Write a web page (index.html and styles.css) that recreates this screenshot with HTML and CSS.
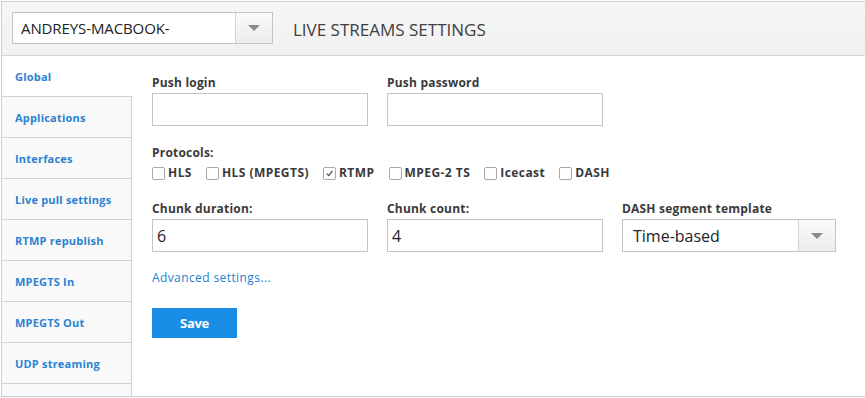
FILE: index.html
```html
<!DOCTYPE html>
<html lang="en">
<head>
  <meta charset="UTF-8">
  <title>Live streams settings</title>
  <link rel="stylesheet" href="styles.css">
</head>
<body>
  <div class="frame">
    <header class="topbar">
      <div class="picker host-picker">
        <span class="picker-value">ANDREYS-MACBOOK-</span>
        <span class="picker-arrow"><span class="tri"></span></span>
      </div>
      <h1>LIVE STREAMS SETTINGS</h1>
    </header>

    <div class="layout">
      <nav class="tabs">
        <a class="tab active">Global</a>
        <a class="tab">Applications</a>
        <a class="tab">Interfaces</a>
        <a class="tab">Live pull settings</a>
        <a class="tab">RTMP republish</a>
        <a class="tab">MPEGTS In</a>
        <a class="tab">MPEGTS Out</a>
        <a class="tab">UDP streaming</a>
        <span class="tab stub"></span>
      </nav>

      <main class="panel">
        <div class="row">
          <div class="field">
            <label>Push login</label>
            <div class="input"></div>
          </div>
          <div class="field">
            <label>Push password</label>
            <div class="input"></div>
          </div>
        </div>

        <div class="protocols">
          <label>Protocols:</label>
          <div class="checks">
            <span class="check"><span class="box"></span>HLS</span>
            <span class="check"><span class="box"></span>HLS (MPEGTS)</span>
            <span class="check"><span class="box on"><svg viewBox="0 0 10 10" width="9" height="9"><path d="M2 5.2 L4.2 7.4 L8.2 2.2" fill="none" stroke="#444" stroke-width="1.3"/></svg></span>RTMP</span>
            <span class="check"><span class="box"></span>MPEG-2 TS</span>
            <span class="check"><span class="box"></span>Icecast</span>
            <span class="check"><span class="box"></span>DASH</span>
          </div>
        </div>

        <div class="row">
          <div class="field">
            <label>Chunk duration:</label>
            <div class="input">6</div>
          </div>
          <div class="field">
            <label>Chunk count:</label>
            <div class="input">4</div>
          </div>
          <div class="field">
            <label>DASH segment template</label>
            <div class="picker">
              <span class="picker-value">Time-based</span>
              <span class="picker-arrow"><span class="tri"></span></span>
            </div>
          </div>
        </div>

        <a class="advanced">Advanced settings...</a>

        <button class="save">Save</button>
      </main>
    </div>
  </div>
</body>
</html>
```

FILE: styles.css
```css
body {
  margin: 0;
  background: #fff;
  font-family: "Open Sans", Arial, sans-serif;
  color: #333;
}
.frame {
  margin: 1px 0 0 1px;
  height: 394px;
  border-top: 1px solid #cdcdcd;
  border-left: 1px solid #cdcdcd;
  border-bottom: 1px solid #cdcdcd;
  display: flex;
  flex-direction: column;
}
.topbar {
  height: 53px;
  background: linear-gradient(#f6f6f6, #f1f1f1);
  border-bottom: 1px solid #d6d6d6;
  display: flex;
  align-items: center;
  padding-left: 10px;
}
.topbar h1 {
  margin: 0 0 0 20px;
  font-family: "Open Sans", Arial, sans-serif;
  font-weight: 400;
  font-size: 17px;
  letter-spacing: 0;
  color: #404040;
  padding-top: 1px;
}
.picker {
  display: flex;
  border: 1px solid #c4c4c4;
  background: #fff;
  box-sizing: border-box;
  height: 33px;
}
.host-picker {
  width: 261px;
  height: 32px;
  margin-top: -1px;
}
.picker-value {
  flex: 1;
  display: flex;
  align-items: center;
  padding-left: 10px;
  font-size: 16px;
  color: #222;
}
.host-picker .picker-value {
  padding-left: 8px;
  font-size: 15px;
  letter-spacing: -0.1px;
}
.picker-arrow {
  width: 36px;
  border-left: 1px solid #d4d4d4;
  background: linear-gradient(#fafafa, #ececec);
  display: flex;
  align-items: center;
  justify-content: center;
}
.tri {
  width: 0;
  height: 0;
  border-left: 6px solid transparent;
  border-right: 6px solid transparent;
  border-top: 6px solid #8a8a8a;
}
.layout {
  flex: 1;
  display: flex;
}
.tabs {
  width: 130px;
  display: flex;
  flex-direction: column;
}
.tab {
  height: 40px;
  flex: none;
  display: flex;
  align-items: center;
  padding-left: 13px;
  background: #f9f9f9;
  border-bottom: 1px solid #d2d2d2;
  border-right: 1px solid #d2d2d2;
  font-size: 11px;
  font-weight: 700;
  letter-spacing: 0.2px;
  color: #2a82d2;
}
.tab.active {
  background: #fff;
  border-right-color: #fff;
  margin-right: -1px;
}
.tab.stub {
  flex: 1;
  height: auto;
  border-bottom: none;
}
.panel {
  flex: 1;
  padding: 20px 20px 0 20px;
}
label {
  display: block;
  font-size: 12px;
  font-weight: 700;
  letter-spacing: 0.2px;
  color: #3a3a3a;
  line-height: 14px;
  margin-bottom: 3px;
}
.row {
  display: grid;
  grid-template-columns: 216px 216px 214px;
  column-gap: 19px;
}
.input {
  height: 33px;
  box-sizing: border-box;
  border: 1px solid #c4c4c4;
  background: #fff;
  padding-left: 4px;
  display: flex;
  align-items: center;
  font-size: 16px;
  color: #222;
}
.protocols {
  margin: 20px 0 22px;
}
.protocols label {
  margin-bottom: 6px;
}
.checks {
  display: flex;
  gap: 14px;
}
.check {
  display: flex;
  align-items: center;
  font-size: 12px;
  font-weight: 700;
  letter-spacing: 0.45px;
  color: #3a3a3a;
  line-height: 14px;
}
.box {
  width: 11px;
  height: 11px;
  border: 1px solid #a8a8a8;
  border-radius: 2px;
  background: #fff;
  margin-right: 3px;
  display: flex;
  align-items: center;
  justify-content: center;
}
.advanced {
  display: block;
  margin-top: 17px;
  font-size: 12px;
  color: #1d7fd0;
  letter-spacing: 0.4px;
}
.save {
  margin-top: 22px;
  width: 85px;
  height: 30px;
  border: none;
  background: #1a8ee6;
  color: #fff;
  font-family: "Open Sans", Arial, sans-serif;
  font-size: 13px;
  font-weight: 700;
  letter-spacing: -0.3px;
  cursor: pointer;
}
```
